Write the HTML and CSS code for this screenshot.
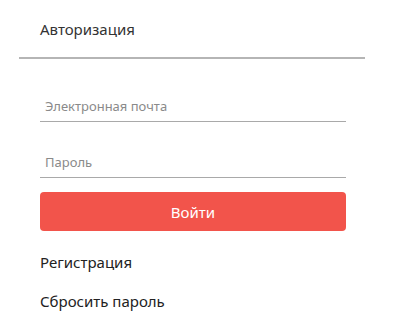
FILE: index.html
```html
<!DOCTYPE html>
<html lang="ru">
<head>
<meta charset="utf-8">
<link rel="stylesheet" href="styles.css">
</head>
<body>
<div class="header"><span class="title">Авторизация</span></div>
<form class="form">
  <div class="field field-email"><input type="email" placeholder="Электронная почта"></div>
  <div class="field field-pass"><input type="password" placeholder="Пароль"></div>
  <button type="button" class="btn">Войти</button>
  <a class="link link-reg">Регистрация</a>
  <a class="link link-reset">Сбросить пароль</a>
</form>
</body>
</html>
```
FILE: styles.css
```css
html, body { margin: 0; padding: 0; background: #fff; }
body { font-family: "Noto Sans", "Open Sans", sans-serif; color: #222; width: 400px; height: 316px; overflow: hidden; }
.header { margin-left: 19px; width: 346px; height: 57px; border-bottom: 2px solid #b5b5b5; box-sizing: content-box; }
.title { display: block; padding-left: 21px; padding-top: 19px; font-size: 15px; line-height: 20px; color: #333; }
.form { margin-left: 40px; width: 306px; display: flex; flex-direction: column; }
.field { border-bottom: 1px solid #a9a9a9; }
.field input { border: 0; outline: 0; width: 100%; box-sizing: border-box; font-family: inherit; font-size: 13px; padding: 0 0 0 5px; height: 30px; color: #333; background: transparent; }
.field input::placeholder { color: #8a8a8a; }
.field-email { margin-top: 32px; }
.field-pass { margin-top: 25px; }
.btn { margin-top: 14px; height: 39px; border: 0; border-radius: 4px; background: #f2544b; color: #fff; font-family: inherit; font-size: 15px; padding: 0; }
.link { font-size: 15px; line-height: 20px; color: #222; }
.link-reg { margin-top: 21px; }
.link-reset { margin-top: 19px; }
```
